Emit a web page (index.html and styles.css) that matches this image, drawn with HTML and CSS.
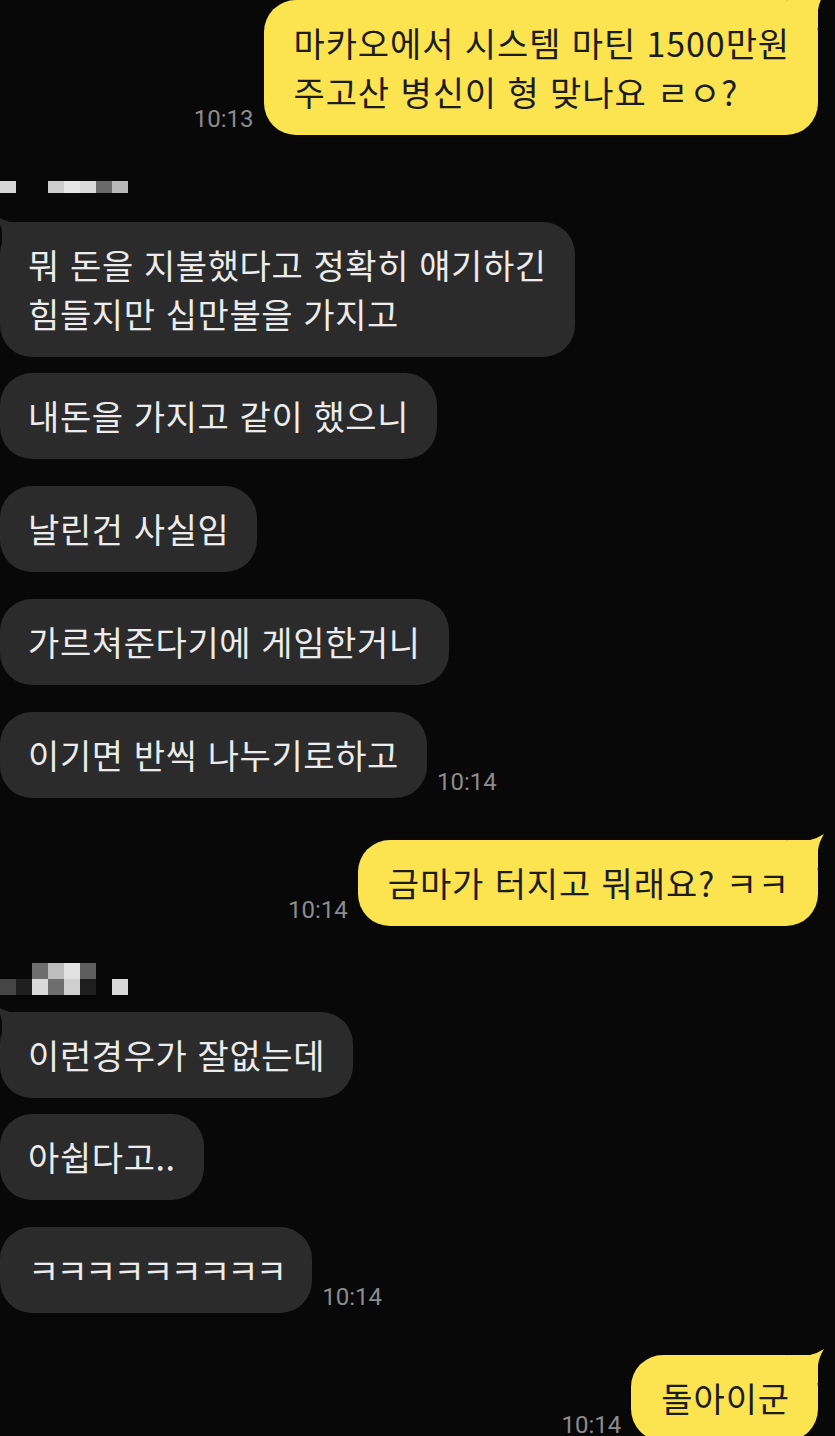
FILE: index.html
```html
<!DOCTYPE html>
<html lang="ko">
<head>
    <meta charset="UTF-8">
    <meta name="viewport" content="width=device-width, initial-scale=1.0">
    <title>채팅</title>
    <link rel="stylesheet" href="styles.css">
</head>
<body>
    <div class="chat">
        <div class="row me">
            <span class="time">10:13</span>
            <div class="bubble yellow">
                <svg class="tail tail-right" viewBox="0 0 36 34"><path d="M0 6 L22 6 Q30 4 36 0 Q31 8 30 16 L30 34 L0 34 Z"/></svg>
                마카오에서 시스템 마틴 1500만원<br>주고산 병신이 형 맞나요 ㄹㅇ?
            </div>
        </div>

        <!-- 이름 모자이크 -->
        <div class="name name-1">
            <span class="px p1"></span><span class="px"></span><span class="px"></span><span class="px p2"></span>
            <span class="px p3"></span><span class="px p4"></span><span class="px p5"></span><span class="px p6"></span>
        </div>

        <div class="row first">
            <div class="bubble dark">
                <svg class="tail tail-left" viewBox="0 0 36 34"><path d="M36 6 L14 6 Q6 4 0 0 Q5 8 6 16 L6 34 L36 34 Z"/></svg>
                뭐 돈을 지불했다고 정확히 얘기하긴<br>힘들지만 십만불을 가지고
            </div>
        </div>
        <div class="row tight">
            <div class="bubble dark">내돈을 가지고 같이 했으니</div>
        </div>
        <div class="row">
            <div class="bubble dark">날린건 사실임</div>
        </div>
        <div class="row">
            <div class="bubble dark">가르쳐준다기에 게임한거니</div>
        </div>
        <div class="row">
            <div class="bubble dark">이기면 반씩 나누기로하고</div>
            <span class="time">10:14</span>
        </div>

        <div class="row me wide">
            <span class="time">10:14</span>
            <div class="bubble yellow">
                <svg class="tail tail-right" viewBox="0 0 36 34"><path d="M0 6 L22 6 Q30 4 36 0 Q31 8 30 16 L30 34 L0 34 Z"/></svg>
                금마가 터지고 뭐래요? ㅋㅋ
            </div>
        </div>

        <div class="name name-2">
            <span class="px"></span><span class="px"></span><span class="px q1"></span><span class="px q2"></span>
            <span class="px q3"></span><span class="px q4"></span><span class="px"></span><span class="px"></span>
            <span class="px q5"></span><span class="px q6"></span><span class="px q7"></span><span class="px q1"></span>
            <span class="px q8"></span><span class="px q6"></span><span class="px"></span><span class="px q7"></span>
        </div>

        <div class="row first small">
            <div class="bubble dark">
                <svg class="tail tail-left" viewBox="0 0 36 34"><path d="M36 6 L14 6 Q6 4 0 0 Q5 8 6 16 L6 34 L36 34 Z"/></svg>
                이런경우가 잘없는데
            </div>
        </div>
        <div class="row tight">
            <div class="bubble dark">아쉽다고..</div>
        </div>
        <div class="row">
            <div class="bubble dark"><span class="jamo">ㅋㅋㅋㅋㅋㅋㅋㅋㅋ</span></div>
            <span class="time">10:14</span>
        </div>

        <div class="row me wide">
            <span class="time">10:14</span>
            <div class="bubble yellow">
                <svg class="tail tail-right" viewBox="0 0 36 34"><path d="M0 6 L22 6 Q30 4 36 0 Q31 8 30 16 L30 34 L0 34 Z"/></svg>
                돌아이군
            </div>
        </div>
    </div>
</body>
</html>
```

FILE: styles.css
```css
html, body {
    margin: 0;
    padding: 0;
    overflow: hidden;
    background-color: #080808;
}

body {
    font-family: "Noto Sans CJK KR", "Noto Sans", sans-serif;
    height: 1436px;
}

.chat {
    display: flex;
    flex-direction: column;
    padding: 0 17px 0 0;
}

.row {
    display: flex;
    align-items: flex-end;
    gap: 10px;
    margin-top: 27px;
}

.row:first-child {
    margin-top: 0;
}

.row.me {
    justify-content: flex-end;
}

.row.wide {
    margin-top: 42px;
}

.row.first {
    margin-top: 29px;
}

.row.first.small {
    margin-top: 17px;
}

.row.tight {
    margin-top: 16px;
}

.bubble {
    position: relative;
    font-size: 34px;
    line-height: 49px;
    letter-spacing: 0.6px;
    padding: 18px 28px 19px 28px;
    border-radius: 32px;
    white-space: nowrap;
}

.bubble.dark {
    background-color: #2b2b2b;
    color: #ececec;
}

.bubble.yellow {
    background-color: #fbe44f;
    color: #1c1c1c;
    padding-left: 30px;
    letter-spacing: 0.9px;
}

.jamo {
    letter-spacing: -2.8px;
}

.tail {
    position: absolute;
    top: -6px;
    width: 36px;
    height: 34px;
}

.tail-right {
    right: -6px;
    fill: #fbe44f;
}

.tail-left {
    left: -4px;
    fill: #2b2b2b;
}

.time {
    font-family: Roboto, "Liberation Sans", sans-serif;
    font-size: 24px;
    line-height: 26px;
    color: #8c8c8c;
    margin-bottom: 3px;
}

/* 이름 모자이크 */
.name {
    display: grid;
    grid-template-columns: repeat(8, 16px);
    filter: blur(0.6px);
}

.name-1 {
    margin-top: 46px;
    grid-auto-rows: 12px;
}

.name-2 {
    margin-top: 37px;
    grid-auto-rows: 16px;
}

.px { background-color: transparent; }
.p1 { background-color: #d6d6d6; }
.p2 { background-color: #cdcdcd; }
.p3 { background-color: #e6e6e6; }
.p4 { background-color: #dadada; }
.p5 { background-color: #6a6a6a; }
.p6 { background-color: #b8b8b8; }

.q1 { background-color: #6e6e6e; }
.q2 { background-color: #bdbdbd; }
.q3 { background-color: #e2e2e2; }
.q4 { background-color: #5e5e5e; }
.q5 { background-color: #454545; }
.q6 { background-color: #1e1e1e; }
.q7 { background-color: #d9d9d9; }
.q8 { background-color: #cfcfcf; }
```
